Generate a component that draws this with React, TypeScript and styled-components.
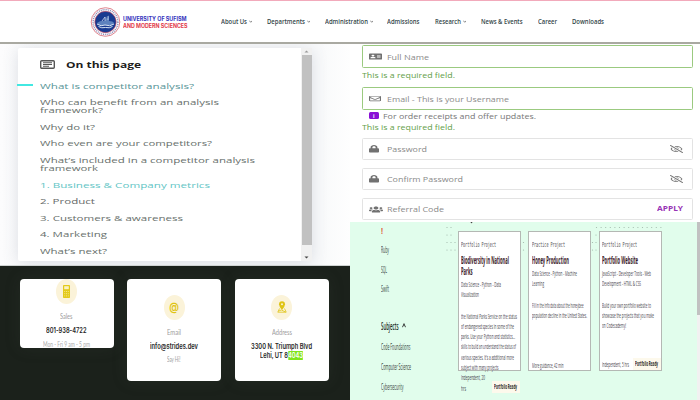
import React, { useLayoutEffect, useRef, useState } from "react";
import styled, { createGlobalStyle, css } from "styled-components";
import { FaAddressCard, FaRegEnvelope, FaLock, FaUsers, FaRegEyeSlash } from "react-icons/fa";

const GlobalStyle = createGlobalStyle`
  * { box-sizing: border-box; }
  body { margin: 0; overflow: hidden; background: #fff; }
  ul { list-style: none; margin: 0; padding: 0; }
`;

/* ---------- width-fitted text ---------- */

type Face = "open" | "inter" | "mono" | "lato";
const faces: Record<Face, string> = {
  open: '"Open Sans", sans-serif',
  inter: 'Inter, sans-serif',
  mono: '"DejaVu Sans Mono", monospace',
  lato: 'Lato, sans-serif',
};

interface LineStyle {
  $w: number;
  $h: number;
  $size: number;
  $face: Face;
  $weight: number;
  $color: string;
  $gap: number;
}

const LineBox = styled.div<LineStyle>`
  flex: none;
  width: ${(p) => p.$w}px;
  height: ${(p) => p.$h}px;
  margin-top: ${(p) => p.$gap}px;
  line-height: ${(p) => p.$h}px;
  font-family: ${(p) => faces[p.$face]};
  font-size: ${(p) => p.$size}px;
  font-weight: ${(p) => p.$weight};
  color: ${(p) => p.$color};
  white-space: nowrap;
`;

const Stretch = styled.span`
  display: inline-block;
  vertical-align: top;
  transform-origin: 0 50%;
`;

interface LineProps {
  w: number;
  h?: number;
  size?: number;
  face?: Face;
  weight?: number;
  color?: string;
  gap?: number;
  children: React.ReactNode;
}

function Line({ w, h = 10, size = 8, face = "open", weight = 400, color = "#555", gap = 0, children }: LineProps) {
  const ref = useRef<HTMLSpanElement>(null);
  const [scale, setScale] = useState(1);
  useLayoutEffect(() => {
    if (ref.current) setScale((w * scale) / ref.current.getBoundingClientRect().width);
  }, [w]);
  return (
    <LineBox $w={w} $h={h} $size={size} $face={face} $weight={weight} $color={color} $gap={gap}>
      <Stretch ref={ref} style={{ transform: `scaleX(${scale})` }}>{children}</Stretch>
    </LineBox>
  );
}

/* ---------- page ---------- */

const Page = styled.div`
  width: 700px;
  height: 400px;
  display: grid;
  grid-template-rows: 44px 356px;
  overflow: hidden;
`;
const Header = styled.header`
  display: flex;
  align-items: center;
  height: 44px;
  padding: 0 0 0 89.500px;
  border-top: 1px solid #f2aabb;
  border-bottom: 2px solid #a9a9a1;
  background: #fff;
`;
const Brand = styled.div`
  display: flex;
  align-items: center;
  gap: 2px;
  width: 131px;
`;
const BrandName = styled.div`
  padding-top: 2px;
`;
const Nav = styled.nav`
  display: flex;
  align-items: center;
`;
const NavItem = styled.div<{ $w: number }>`
  display: flex;
  align-items: center;
  gap: 2px;
  width: ${(p) => p.$w}px;
`;
const Columns = styled.main`
  display: grid;
  grid-template-columns: 350px 350px;
`;
const LeftColumn = styled.div`
  display: grid;
  grid-template-rows: 222px 134px;
`;
const RightColumn = styled.div`
  display: grid;
  grid-template-rows: 178px 178px;
`;

const ChevronIcon = styled.svg`
  display: block;
  flex: none;
`;
const Chevron = ({ up = false }: { up?: boolean }) => (
  <ChevronIcon width={up ? 4 : 3.5} height={up ? 5 : 3} viewBox="0 0 4 3" fill="none" stroke={up ? "#222" : "#666"} strokeWidth={up ? 0.7 : 0.8} preserveAspectRatio="none">
    <path d={up ? "M.5 2.5 2 .5l1.500 2" : "M.3 .6 2 2.300 3.700 .6"} />
  </ChevronIcon>
);

const Crest = () => (
  <svg width="31" height="30" viewBox="0 0 31 30">
    <circle cx="15.500" cy="15" r="14.300" fill="#fff" stroke="#dc7681" strokeWidth=".9" />
    <circle cx="15.500" cy="15" r="12.400" fill="none" stroke="#8d8bb5" strokeWidth="1.500" strokeDasharray="1 .9" />
    <circle cx="15.500" cy="15" r="10.700" fill="#183b91" stroke="#d34a5b" strokeWidth=".6" />
    <path d="M7 16q4-3 8-2l1-5 1 3 2-4v6q4 0 5 2l-2 2H9z" fill="#5d82be" />
    <path d="M7 17q4 3 8 1 5 2 9-1M8.500 19.500q3 2 7 1 4 1 7-1" fill="none" stroke="#d8e4f4" strokeWidth="1" />
    <path d="M12 14l3-4v4M18 13V9" stroke="#cbd9ef" strokeWidth=".8" fill="none" />
  </svg>
);

const navItems: [string, number, number, boolean][] = [
  ["About Us", 26, 46, true],
  ["Departments", 38, 58, true],
  ["Administration", 43, 62.5, true],
  ["Admissions", 32.5, 47.5, false],
  ["Research", 26, 46.5, true],
  ["News & Events", 41.5, 56.5, false],
  ["Career", 19, 34, false],
  ["Downloads", 32, 40, false],
];

/* ---------- table of contents ---------- */

const TocArea = styled.section`
  padding: 4px 0 0 18px;
  background: linear-gradient(90deg, #fcfcfd, #f9fafb 12%, #f9fafb 92%, #fefefe);
  border-bottom: 1px solid #cfd3d2;
  overflow: hidden;
`;
const TocCard = styled.div`
  display: flex;
  justify-content: space-between;
  width: 294px;
  height: 213px;
  background: #fff;
  border-radius: 2px;
  box-shadow: 0 2px 16px rgba(65, 80, 105, 0.17);
`;
const TocBody = styled.div`
  padding: 11px 0 0 22px;
`;
const TocHead = styled.div`
  display: flex;
  align-items: center;
  gap: 11px;
  height: 11px;
  margin-bottom: 11.6px;
`;
const TocItem = styled.li<{ $active?: boolean }>`
  display: flex;
  flex-direction: column;
  position: relative;
  margin-bottom: 8.1px;
  ${(p) =>
    p.$active &&
    css`
      &::before {
        content: "";
        position: absolute;
        left: -23px;
        top: 2.4px;
        width: 16px;
        height: 2px;
        background: #42e8e2;
      }
    `}
`;
const Scrollbar = styled.div`
  display: flex;
  flex-direction: column;
  align-items: center;
  width: 11px;
  background: #f1f1f1;
`;
const ScrollThumb = styled.div`
  width: 10px;
  height: 190px;
  background: #c1c1c1;
`;
const ScrollArrow = styled.svg<{ $h: number }>`
  display: block;
  width: 11px;
  height: ${(p) => p.$h}px;
`;

const toc: { lines: [string, number][]; color: string; active?: boolean }[] = [
  { lines: [["What is competitor analysis?", 154]], color: "#589598", active: true },
  { lines: [["Who can benefit from an analysis", 179], ["framework?", 63]], color: "#68706c" },
  { lines: [["Why do it?", 55]], color: "#68706c" },
  { lines: [["Who even are your competitors?", 172]], color: "#68706c" },
  { lines: [["What’s included in a competitor analysis", 215], ["framework", 58]], color: "#68706c" },
  { lines: [["1. Business & Company metrics", 170]], color: "#62c5c5" },
  { lines: [["2. Product", 55]], color: "#666a68" },
  { lines: [["3. Customers & awareness", 143]], color: "#68706c" },
  { lines: [["4. Marketing", 67]], color: "#68706c" },
  { lines: [["What’s next?", 67]], color: "#68706c" },
];

/* ---------- contact ---------- */

const Contact = styled.section`
  display: grid;
  grid-template-columns: 94px 94px 94px;
  column-gap: 13.5px;
  align-items: start;
  padding: 13px 0 0 19.5px;
  background: #1b211b;
`;
const ContactCard = styled.div<{ $short?: boolean }>`
  display: flex;
  flex-direction: column;
  align-items: center;
  height: ${(p) => (p.$short ? 69 : 101.5)}px;
  padding-top: ${(p) => (p.$short ? 0 : 16)}px;
  background: #fff;
  border-radius: 4px;
  overflow: hidden;
  box-shadow: 0 0 16px rgba(70, 85, 70, 0.18);
`;
const Bubble = styled.div`
  display: grid;
  place-items: center;
  flex: none;
  width: 21px;
  height: 24.5px;
  margin-bottom: 8.5px;
  border-radius: 50%;
  background: #fbf3d9;
`;
const Mark = styled.span`
  background: #80e51c;
  color: #fff;
`;
const At = styled.span`
  font: 600 12px/14px Inter, sans-serif;
  color: #dfc414;
  transform: scaleX(0.8);
`;

/* ---------- form ---------- */

const Form = styled.section`
  display: flex;
  flex-direction: column;
  padding: 1px 7.500px 0 11.500px;
  background: #fff;
`;
const Field = styled.div<{ $invalid?: boolean; $gap?: number }>`
  display: flex;
  align-items: center;
  flex: none;
  height: ${(p) => (p.$invalid ? 23 : 22)}px;
  margin-top: ${(p) => p.$gap ?? 0}px;
  padding: 0 9px 0 6px;
  border: 1px solid ${(p) => (p.$invalid ? "#9bca80" : "#e3e3e3")};
  border-radius: 1.500px;
`;
const FieldIcon = styled.span<{ $w: number; $h: number }>`
  display: flex;
  align-items: center;
  width: 18px;
  color: #717171;
  svg {
    width: ${(p) => p.$w}px;
    height: ${(p) => p.$h}px;
  }
`;
const Trailing = styled.span`
  display: flex;
  margin-left: auto;
  color: #707070;
  svg {
    width: 13px;
    height: 8px;
  }
`;
const Hint = styled.div`
  display: flex;
  align-items: center;
  gap: 4px;
  height: 11px;
  padding-left: 7px;
`;
const Badge = styled.span`
  display: grid;
  place-items: center;
  width: 10.500px;
  height: 6.500px;
  border-radius: 1.500px;
  background: #8a0fd6;
  color: #fff;
  font: 700 5px/6px "Open Sans", sans-serif;
`;

/* ---------- catalog ---------- */

const Catalog = styled.section`
  display: grid;
  grid-template-columns: 96px 1fr 3.500px;
  background-color: #e1fdec;
  overflow: hidden;
`;
const Sidebar = styled.div`
  display: flex;
  flex-direction: column;
  padding: 3.500px 0 0 30.500px;
`;
const SubjectHead = styled.div`
  display: flex;
  align-items: center;
  gap: 4px;
  height: 12px;
  margin: 25.500px 0 10.500px;
`;
const Board = styled.div`
  display: flex;
  gap: 7.500px;
  align-items: flex-start;
  position: relative;
  padding: 9px 0 0 11.500px;
`;
const Dots = styled.svg`
  position: absolute;
  left: 0;
  top: 0;
`;
const ProjectCard = styled.article`
  display: flex;
  flex-direction: column;
  flex: none;
  position: relative;
  width: 63px;
  height: 140px;
  padding: 8px 0 0 2.500px;
  border: 1px solid #b4b8b4;
  background: #fff;
`;
const CardFoot = styled.div<{ $overflow?: boolean }>`
  display: flex;
  justify-content: space-between;
  align-items: ${(p) => (p.$overflow ? "flex-end" : "center")};
  margin-top: ${(p) => (p.$overflow ? 0 : "auto")};
  flex: none;
`;
const Ready = styled.div`
  display: grid;
  place-items: center;
  width: 28px;
  height: 12px;
  background: #fdf9ec;
`;
const CatalogTrack = styled.div`
  background: #f1f1f1;
`;
const CatalogThumb = styled.div`
  height: 93px;
  background: #c1c1c1;
`;

const ReadyBadge = () => (
  <Ready><Line w={23} h={10} size={7} weight={700} color="#262222">Portfolio Ready</Line></Ready>
);

const dotPoints: [number, number][] = [
  ...[5.5, 13].flatMap((y) => [1, 5].map((x): [number, number] => [x, y])),
  ...[20.5, 28].flatMap((y) => [1, 5, 9].map((x): [number, number] => [x, y])),
  ...[20.5, 28].flatMap((y) => [77.5, 146.5, 150].map((x): [number, number] => [x, y])),
  [150, 13],
  ...Array.from({ length: 15 }, (_, i): [number, number] => [150.5 + i * 4.6, 5.5]),
];

interface Project {
  kind: string; kw: number;
  title: [string, number][];
  tags: [string, number][];
  body: [string, number][];
  foot: [string, number][];
  ready: boolean;
  overflow?: boolean;
}
const projects: Project[] = [
  {
    kind: "Portfolio Project", kw: 35,
    title: [["Biodiversity in National", 48], ["Parks", 11.5]],
    tags: [["Data Science - Python - Data", 40], ["Visualization", 18]],
    body: [
      ["the National Parks Service on the status", 56], ["of endangered species in some of the", 53],
      ["parks. Use your Python and statistics...", 54], ["skills to build an understand the status of", 55],
      ["various species. It’s a additional more", 53], ["subject with many projects", 37.5],
    ],
    foot: [["Independent, 20", 24], ["hrs", 5]], ready: true, overflow: true,
  },
  {
    kind: "Practice Project", kw: 33,
    title: [["Honey Production", 37]],
    tags: [["Data Science - Python - Machine", 45], ["Learning", 12]],
    body: [["Fill in the info data about the honeybee", 51.5], ["population decline in the United States.", 55]],
    foot: [["More guidance, 42 min", 31.5]], ready: false,
  },
  {
    kind: "Portfolio Project", kw: 35,
    title: [["Portfolio Website", 36]],
    tags: [["JavaScript - Developer Tools - Web", 49], ["Development - HTML & CSS", 39]],
    body: [["Build your own portfolio website to", 49], ["showcase the projects that you make", 52], ["on Codecademy!", 24]],
    foot: [["Independent, 5 hrs", 27]], ready: true,
  },
];

const bodyInk = "#443e4a";
const sideInk = "#37423c";

export default function App() {
  return (
    <Page>
      <GlobalStyle />
      <Header>
        <Brand>
          <Crest />
          <BrandName>
            <Line w={63.5} h={6.800} size={5.600} face="inter" weight={700} color="#3535bd">UNIVERSITY OF SUFISM</Line>
            <Line w={64.5} h={6.800} size={5.600} face="inter" weight={700} color="#e23a4a">AND MODERN SCIENCES</Line>
          </BrandName>
        </Brand>
        <Nav>
          {navItems.map(([label, w, full, menu]) => (
            <NavItem key={label} $w={full}>
              <Line w={w} h={9} size={6.500} weight={600} color="#35474a">{label}</Line>
              {menu && <Chevron />}
            </NavItem>
          ))}
        </Nav>
      </Header>
      <Columns>
        <LeftColumn>
          <TocArea>
            <TocCard>
              <TocBody>
                <TocHead>
                  <svg width="15" height="9" viewBox="0 0 15 9">
                    <rect x=".7" y=".7" width="13.600" height="7.600" rx="1" fill="#fff" stroke="#555" strokeWidth="1.400" />
                    <path d="M3 2.800h9M3 4.500h9M3 6.200h6" stroke="#555" strokeWidth="1.100" />
                  </svg>
                  <Line w={75} h={11} size={8.500} weight={700} color="#1d1d1d">On this page</Line>
                </TocHead>
                <ul>
                  {toc.map((item) => (
                    <TocItem key={item.lines[0][0]} $active={item.active}>
                      {item.lines.map(([text, w]) => (
                        <Line key={text} w={w} h={8.400} size={7.300} color={item.color}>{text}</Line>
                      ))}
                    </TocItem>
                  ))}
                </ul>
              </TocBody>
              <Scrollbar>
                <ScrollArrow $h={7} viewBox="0 0 11 7"><path d="M3.500 4.500h4l-2-2z" fill="#999" /></ScrollArrow>
                <ScrollThumb />
                <ScrollArrow $h={16} viewBox="0 0 11 16"><path d="M3.500 11.500h4l-2 2z" fill="#444" /></ScrollArrow>
              </Scrollbar>
            </TocCard>
          </TocArea>
          <Contact>
            <ContactCard $short>
              <Bubble>
                <svg width="7" height="13" viewBox="0 0 7 13">
                  <rect width="7" height="13" rx=".8" fill="#e3ca19" />
                  <rect x="1.200" y="1.200" width="4.600" height="3" fill="#fbf3c0" />
                  <path d="M1.200 6.500h4.600M1.200 8.700h4.600M1.200 10.900h4.600" stroke="#f7eaa0" strokeWidth=".8" strokeDasharray="1 .8" />
                </svg>
              </Bubble>
              <Line w={12.5} size={7.500} face="lato" color="#9c9c9c">Sales</Line>
              <Line w={40.500} gap={3.500} size={7.500} face="inter" weight={600} color="#252525">801-938-4722</Line>
              <Line w={47} gap={4} size={7.500} face="lato" color="#aaa">Mon - Fri 9 am - 5 pm</Line>
            </ContactCard>
            <ContactCard>
              <Bubble><At>@</At></Bubble>
              <Line w={14} size={7.500} face="lato" color="#9c9c9c">Email</Line>
              <Line w={48} gap={3.500} size={7.500} face="inter" weight={600} color="#252525">info@strides.dev</Line>
              <Line w={13.5} gap={3.500} size={7.500} face="lato" color="#9c9c9c">Say Hi!</Line>
            </ContactCard>
            <ContactCard>
              <Bubble>
                <svg width="10" height="12" viewBox="0 0 10 12">
                  <path d="M5 9Q2 5.500 2 3.200a3 3 0 0 1 6 0Q8 5.500 5 9z" fill="#dfc414" />
                  <circle cx="5" cy="3.200" r="1" fill="#fbf3d9" />
                  <path d="M2.500 7.500.8 11.200h8.400L7.500 7.500M1.500 10l3-1 4 2" fill="none" stroke="#dfc414" strokeWidth=".8" />
                </svg>
              </Bubble>
              <Line w={20} size={7.500} face="lato" color="#9c9c9c">Address</Line>
              <Line w={61} gap={3.500} h={9.500} size={7.500} face="inter" weight={600} color="#252525">3300 N. Triumph Blvd</Line>
              <Line w={43} h={9.500} size={7.500} face="inter" weight={600} color="#252525">Lehi, UT 8<Mark>4043</Mark></Line>
            </ContactCard>
          </Contact>
        </LeftColumn>
        <RightColumn>
          <Form>
            <Field $invalid>
              <FieldIcon $w={13} $h={7}><FaAddressCard preserveAspectRatio="none" /></FieldIcon>
              <Line w={42} size={7.300} color="#8a8a8a">Full Name</Line>
            </Field>
            <Line w={93} gap={2} size={7.300} color="#64a049">This is a required field.</Line>
            <Field $invalid $gap={7}>
              <FieldIcon $w={12} $h={7}><FaRegEnvelope preserveAspectRatio="none" /></FieldIcon>
              <Line w={122} size={7.300} color="#8a8a8a">Email - This is your Username</Line>
            </Field>
            <Hint>
              <Badge>i</Badge>
              <Line w={153} size={7.300} color="#777">For order receipts and offer updates.</Line>
            </Hint>
            <Line w={93} gap={0.500} size={7.300} color="#64a049">This is a required field.</Line>
            <Field $gap={6.500}>
              <FieldIcon $w={10} $h={7.5}><FaLock preserveAspectRatio="none" /></FieldIcon>
              <Line w={40} size={7.300} color="#8a8a8a">Password</Line>
              <Trailing><FaRegEyeSlash preserveAspectRatio="none" /></Trailing>
            </Field>
            <Field $gap={8}>
              <FieldIcon $w={10} $h={7.5}><FaLock preserveAspectRatio="none" /></FieldIcon>
              <Line w={76} size={7.300} color="#8a8a8a">Confirm Password</Line>
              <Trailing><FaRegEyeSlash preserveAspectRatio="none" /></Trailing>
            </Field>
            <Field $gap={8}>
              <FieldIcon $w={14} $h={7}><FaUsers preserveAspectRatio="none" /></FieldIcon>
              <Line w={57} size={7.300} color="#8a8a8a">Referral Code</Line>
              <Trailing><Line w={26} size={7} weight={700} color="#9833b5">APPLY</Line></Trailing>
            </Field>
          </Form>
          <Catalog>
            <Sidebar>
              <Line w={2} size={8} weight={700} color="#e0643a">!</Line>
              <Line w={8} gap={9.500} size={8.500} color={sideInk}>Ruby</Line>
              <Line w={6} gap={9.500} size={8.500} color={sideInk}>SQL</Line>
              <Line w={8} gap={9.500} size={8.500} color={sideInk}>Swift</Line>
              <SubjectHead>
                <Line w={17.500} h={12} size={10} weight={600} color="#222a26">Subjects</Line>
                <Chevron up />
              </SubjectHead>
              <Line w={29.500} h={10} size={8.500} color={sideInk}>Code Foundations</Line>
              <Line w={30} gap={9.500} size={8.500} color={sideInk}>Computer Science</Line>
              <Line w={22.500} gap={10} size={8.500} color={sideInk}>Cybersecurity</Line>
            </Sidebar>
            <Board>
              <Dots width="216" height="30" viewBox="0 0 216 30">
                {dotPoints.map(([x, y]) => <circle key={`${x}-${y}`} cx={x} cy={y} r=".6" fill="#9fb5a8" />)}
                <circle cx="25.500" cy=".4" r=".8" fill="#444" />
              </Dots>
              {projects.map((p, i) => (
                <ProjectCard key={i}>
                  <Line w={p.kw} size={7} face="mono" color="#4d4a4d">{p.kind}</Line>
                  {p.title.map(([t, w], n) => (
                    <Line key={t} w={w} h={11} gap={n ? 0 : 5} size={10} weight={700} color="#3a1827">{t}</Line>
                  ))}
                  {p.tags.map(([t, w], n) => (
                    <Line key={t} w={w} h={10.300} gap={n ? 0 : 2} size={8} color={bodyInk}>{t}</Line>
                  ))}
                  {p.body.map(([t, w], n) => (
                    <Line key={t} w={w} h={10.300} gap={n ? 0 : 11} size={8} color={bodyInk}>{t}</Line>
                  ))}
                  <CardFoot $overflow={p.overflow}>
                    <div>
                      {p.foot.map(([t, w]) => (
                        <Line key={t} w={w} size={8} h={10.500} color={bodyInk}>{t}</Line>
                      ))}
                    </div>
                    {p.ready && <ReadyBadge />}
                  </CardFoot>
                </ProjectCard>
              ))}
            </Board>
            <CatalogTrack><CatalogThumb /></CatalogTrack>
          </Catalog>
        </RightColumn>
      </Columns>
    </Page>
  );
}
